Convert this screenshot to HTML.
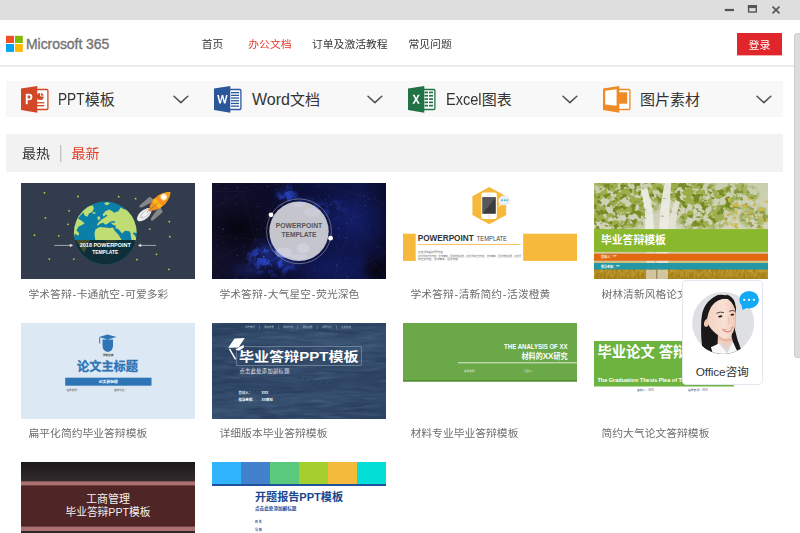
<!DOCTYPE html>
<html lang="zh-CN">
<head>
<meta charset="utf-8">
<title>Microsoft 365</title>
<style>
*{box-sizing:border-box;margin:0;padding:0}
html,body{width:800px;height:533px;overflow:hidden;background:#fff}
body{position:relative;font-family:"Liberation Sans","Noto Sans CJK SC",sans-serif;color:#333;-webkit-font-smoothing:antialiased}
.abs{position:absolute}
#titlebar{position:absolute;left:0;top:0;width:800px;height:20px;background:#dedede}
#titlebar svg{position:absolute;left:0;top:0}
#header{position:absolute;left:0;top:20px;width:794px;height:46px;background:#fff;border-bottom:1px solid #e9e9e9;box-shadow:0 1px 0 #f0f0f0}
#logo{position:absolute;left:6px;top:15px;width:17px;height:18px}
#brand{position:absolute;left:26px;top:14px;height:20px;line-height:20px;font-size:14px;color:#737373;-webkit-text-stroke:0.35px #737373;white-space:nowrap;letter-spacing:-0.06px}
.nav{position:absolute;top:14px;height:20px;line-height:21px;font-size:10.8px;color:#333;white-space:nowrap;transform:scaleY(.9);transform-origin:0 15px}
.nav.on{color:#e33b28}
#login{position:absolute;left:737px;top:13px;width:45px;height:22px;background:#e0262b;color:#fff;font-size:11px;line-height:24px;text-align:center;box-shadow:0 0.5px 0 #e9595c}
#cats{position:absolute;left:6px;top:81px;width:777px;height:36px;background:#f8f8f8}
.cat{position:absolute;top:0;width:194px;height:36px}
.cat svg.ic{position:absolute;left:15px;top:4.8px}
.cat .t{position:absolute;left:52px;top:0;height:36px;line-height:37px;font-size:15px;color:#333;white-space:nowrap}
.cat .t b{font-weight:normal;font-size:16px;display:inline-block;transform-origin:0 50%}
.cat svg.ch{position:absolute;left:167px;top:14px}
#sort{position:absolute;left:6px;top:134px;width:777px;height:38px;background:#f2f2f2}
#sort span{position:absolute;top:0;height:38px;line-height:39px;font-size:14px;white-space:nowrap;transform:scaleY(.93);transform-origin:0 26px}
#sort i{position:absolute;left:54px;top:11px;width:1px;height:17px;background:#c4c4c4;box-shadow:1px 0 0 #e0e0e0}
.card{position:absolute;width:174px;height:96px;overflow:hidden;contain:paint}
.card svg{display:block}
.cap{position:absolute;height:16px;line-height:16px;font-size:10.8px;color:#6c6c6c;white-space:nowrap;margin:1px 0 0 0.5px;transform:scaleY(.93);transform-origin:0 13.5px}
.cap i{font-style:normal;margin:0 0.75px}
#widget{position:absolute;left:682px;top:280px;width:81px;height:105px}
#widget .txt{position:absolute;left:0;top:83px;width:80.5px;text-align:center;font-size:11.8px;line-height:18px;color:#333;white-space:nowrap;letter-spacing:-0.15px}
#login span{display:inline-block;transform:scaleY(.92);transform-origin:0 19px}
#sb{position:absolute;left:794px;top:20px;width:6px;height:513px;background:#fff;overflow:hidden}
#sb i{position:absolute;left:0;top:13px;width:9px;height:325px;background:#dcdcdc;border:1px solid #cdcdcd;border-radius:3px}
</style>
</head>
<body>
<div id="titlebar">
<svg width="800" height="20" viewBox="0 0 800 20">
<rect x="724.8" y="8.9" width="9.2" height="2.2" fill="#555"/>
<rect x="748.6" y="5.8" width="7.7" height="6.2" fill="none" stroke="#555" stroke-width="1.4"/>
<rect x="747.9" y="5.1" width="9.1" height="3" fill="#555"/>
<path d="M772.5 6.6l7 6.8M779.5 6.6l-7 6.8" stroke="#555" stroke-width="1.6" fill="none"/>
</svg>
</div>
<div id="header">
<svg id="logo" viewBox="0 0 17 18"><rect x="0" y="0.8" width="8" height="7.2" fill="#f25022"/><rect x="9" y="0.8" width="7.8" height="7.2" fill="#7fba00"/><rect x="0" y="9" width="8" height="7.9" fill="#00a4ef"/><rect x="9" y="9" width="7.8" height="7.9" fill="#ffb900"/></svg>
<div id="brand">Microsoft 365</div>
<div class="nav" style="left:201.8px">首页</div>
<div class="nav on" style="left:248.3px">办公文档</div>
<div class="nav" style="left:312px">订单及激活教程</div>
<div class="nav" style="left:408.5px">常见问题</div>
<div id="login"><span>登录</span></div>
</div>
<div id="cats">
<div class="cat" style="left:0">
<svg class="ic" width="28" height="27" viewBox="0 0 28 27"><rect x="14.6" y="3.5" width="12.3" height="20" rx="1" fill="#fff" stroke="#d24726" stroke-width="1.3"/><circle cx="19.2" cy="10.4" r="3.5" fill="#d24726"/><path d="M19.6 6.2v3.9h3.9" stroke="#fff" stroke-width="0.9" fill="none"/><rect x="16" y="16.1" width="7.4" height="1.3" fill="#d24726"/><rect x="16" y="19" width="7.4" height="1.3" fill="#d24726"/><path d="M0 2.5L16.3 0v26.8L0 24.1z" fill="#d24726"/><path d="M4.8 7.8h3.4c2 0 3.2 1.2 3.2 3.2s-1.3 3.3-3.3 3.3H6.7v3.9H4.8zM6.7 9.5v3.1h1.2c1 0 1.5-.5 1.5-1.6s-.5-1.5-1.5-1.5z" fill="#fff"/></svg>
<div class="t"><b style="transform:scaleX(.855);margin-right:-4.5px">PPT</b>模板</div>
<svg class="ch" style="left:167px" width="17" height="10" viewBox="0 0 17 10"><path d="M1 1.2l6.9 6.4 6.9-6.4" fill="none" stroke="#505050" stroke-width="1.5" stroke-linecap="round" stroke-linejoin="round"/></svg>
</div>
<div class="cat" style="left:194px">
<svg class="ic" style="left:14.2px" width="28" height="27" viewBox="0 0 28 27"><rect x="14.6" y="3.5" width="12.3" height="20" rx="1" fill="#fff" stroke="#2b579a" stroke-width="1.3"/><g fill="#2b579a"><rect x="17" y="6" width="8" height="1.3"/><rect x="17" y="8.7" width="8" height="1.3"/><rect x="17" y="11.4" width="8" height="1.3"/><rect x="17" y="14.1" width="8" height="1.3"/><rect x="17" y="16.8" width="8" height="1.3"/><rect x="17" y="19.5" width="8" height="1.3"/></g><path d="M0 2.5L16.3 0v26.8L0 24.1z" fill="#2b579a"/><path d="M3.2 9h1.7l1.3 6 1.5-6h1.5l1.5 6 1.3-6h1.6l-2.1 8.6H9.9L8.4 11.8 6.9 17.6H5.3z" fill="#fff"/></svg>
<div class="t"><b>Word</b>文档</div>
<svg class="ch" style="left:167.25px" width="17" height="10" viewBox="0 0 17 10"><path d="M1 1.2l6.9 6.4 6.9-6.4" fill="none" stroke="#505050" stroke-width="1.5" stroke-linecap="round" stroke-linejoin="round"/></svg>
</div>
<div class="cat" style="left:388px">
<svg class="ic" style="left:14.3px" width="28" height="27" viewBox="0 0 28 27"><rect x="14.6" y="3.5" width="12.3" height="20" rx="1" fill="#fff" stroke="#217346" stroke-width="1.3"/><g fill="#217346"><rect x="16.5" y="5.6" width="3.5" height="1.7"/><rect x="21" y="5.6" width="4" height="1.7"/><rect x="16.5" y="8.9" width="3.5" height="1.7"/><rect x="21" y="8.9" width="4" height="1.7"/><rect x="16.5" y="12.2" width="3.5" height="1.7"/><rect x="21" y="12.2" width="4" height="1.7"/><rect x="16.5" y="15.5" width="3.5" height="1.7"/><rect x="21" y="15.5" width="4" height="1.7"/><rect x="16.5" y="18.8" width="3.5" height="1.7"/><rect x="21" y="18.8" width="4" height="1.7"/></g><path d="M0 2.5L16.3 0v26.8L0 24.1z" fill="#217346"/><path d="M4.6 8.8h2l1.6 3.1 1.6-3.1h1.9l-2.5 4.4 2.6 4.6H9.8L8.1 14.5 6.4 17.8H4.4l2.7-4.6z" fill="#fff"/></svg>
<div class="t"><b style="transform:scaleX(.91);margin-right:-3.5px">Excel</b>图表</div>
<svg class="ch" style="left:167.5px" width="17" height="10" viewBox="0 0 17 10"><path d="M1 1.2l6.9 6.4 6.9-6.4" fill="none" stroke="#505050" stroke-width="1.5" stroke-linecap="round" stroke-linejoin="round"/></svg>
</div>
<div class="cat" style="left:582px">
<svg class="ic" style="left:14.5px" width="28" height="27" viewBox="0 0 28 27"><rect x="14.6" y="3.5" width="12.3" height="20" rx="1" fill="#fff" stroke="#f08a24" stroke-width="1.3"/><rect x="16" y="6.3" width="8.2" height="11.4" fill="#f08a24"/><path d="M0 2.5L16.3 0v26.8L0 24.1z" fill="#f08a24"/><path d="M2.2 4.8L13.6 3.2v16.6L2.2 18.4z" fill="#fff"/></svg>
<div class="t">图片素材</div>
<svg class="ch" style="left:167.7px" width="17" height="10" viewBox="0 0 17 10"><path d="M1 1.2l6.9 6.4 6.9-6.4" fill="none" stroke="#505050" stroke-width="1.5" stroke-linecap="round" stroke-linejoin="round"/></svg>
</div>
</div>
<div id="sort"><span style="left:16px;color:#333">最热</span><i></i><span style="left:65.5px;color:#e33b28">最新</span></div>

<!--CARDS-START-->
<!-- card 1 -->
<div class="card" style="left:21px;top:183px">
<svg width="174" height="96" viewBox="0 0 174 96">
<rect width="174" height="96" fill="#333c4d"/>
<g fill="#cfc93c"><circle cx="23.5" cy="9.8" r="0.9"/><circle cx="57.0" cy="13.5" r="0.9"/><circle cx="97.7" cy="13.7" r="0.9"/><circle cx="114.6" cy="15.7" r="0.9"/><circle cx="48.1" cy="27.8" r="0.9"/><circle cx="24.4" cy="34.8" r="0.9"/><circle cx="47.0" cy="41.3" r="0.9"/><circle cx="13.5" cy="52.2" r="0.9"/><circle cx="37.8" cy="52.8" r="0.9"/><circle cx="28.3" cy="76.1" r="0.9"/><circle cx="52.8" cy="76.1" r="0.9"/><circle cx="115.9" cy="76.6" r="0.9"/><circle cx="135.5" cy="71.3" r="0.9"/><circle cx="148.3" cy="38.7" r="0.9"/><circle cx="128.8" cy="46.1" r="0.9"/><circle cx="148.8" cy="53.7" r="0.9"/><circle cx="147.9" cy="86.3" r="0.9"/></g>
<clipPath id="c1"><circle cx="84.3" cy="50" r="31.4"/></clipPath>
<g clip-path="url(#c1)">
<rect x="50" y="15" width="70" height="70" fill="#0c7fa9"/>
<g transform="translate(43 7) scale(0.10875)" fill="#bfdd72">
<path d="M262 140L275 165 262 200 230 215 215 245 190 235 178 208 150 235 130 262 165 285 190 305 165 322 135 335 115 370 140 400 130 420 100 400 85 470H40V200z"/>
<path d="M370 120L400 112 422 122 405 135 385 140z"/>
<path d="M262 205h28l-2 13h-24zM305 250l20-10 10 25-20 15z"/>
<path d="M355 225L380 195 415 180 445 195 460 210 500 195 520 160 545 175 580 185 700 280V400L640 390 625 415 600 380 560 375 535 400 500 360 470 350 480 330 450 320 430 300H470L465 285 430 290 400 310 380 320 360 300 330 310 310 330 305 315 330 285 350 270 380 250 400 235 385 225 365 245z"/>
<path d="M290 360L330 340 380 345 420 350 450 345 470 380 500 410 525 450 540 480H290L280 400z"/>
<path d="M610 400l30 5 25 35-10 40h-30z"/>
</g>
<rect x="50" y="57" width="70" height="30" fill="#0e2f39"/>
<path d="M55 57h14l-6 13z" fill="#5d5a28" opacity=".7"/>
<path d="M84 57h12l-7 9z" fill="#3c4a2a" opacity=".6"/>
</g>
<text x="84.3" y="64.4" text-anchor="middle" font-family="'Liberation Sans',sans-serif" font-weight="bold" font-size="5.5" fill="#fff" textLength="51" lengthAdjust="spacingAndGlyphs">2018 POWERPOINT</text>
<text x="84.3" y="71" text-anchor="middle" font-family="'Liberation Sans',sans-serif" font-weight="bold" font-size="5.5" fill="#fff" textLength="26" lengthAdjust="spacingAndGlyphs">TEMPLATE</text>
<path d="M33.3 62.4h17M49.2 61.2l2.4 1.2-2.4 1.2zM118 62.4h17M119.8 61.2l-2.4 1.2 2.4 1.2z" stroke="#ececec" stroke-width="0.6" fill="#ececec"/>
<g transform="translate(139 18.1) rotate(-40.8)">
<path d="M-19.6-9.2l2-1h12.6l1.5 5.5h-5l-9.5-2.3zM-19.6 9.2l2 1h12.6l1.5-5.5h-5l-9.5 2.3z" fill="#878787"/>
<ellipse cx="-20.8" cy="0" rx="8.8" ry="4.4" fill="#ededed"/>
<ellipse cx="-19.5" cy="0" rx="6.4" ry="2.9" fill="#cfcfcf"/>
<ellipse cx="-18.5" cy="0" rx="4.8" ry="1.8" fill="#fafafa"/>
<path d="M-14.5-1.6h4v3.2h-4z" fill="#f7941d"/>
<clipPath id="rk"><path d="M-12-2.4Q-6-6 2-5.6 10-4.4 13.8 0 10 4.4 2 5.6-6 6-12 2.4z"/></clipPath>
<g clip-path="url(#rk)"><rect x="-13" y="-7" width="28" height="14" fill="#f7921c"/><rect x="-5.6" y="-7" width="3.8" height="14" fill="#fdb913"/><path d="M10-6l5 6-5 6z" fill="#fbb017" opacity=".6"/></g>
<circle cx="5.6" cy="-0.6" r="3.3" fill="#ffe6a8"/>
<circle cx="5.6" cy="-0.6" r="2.3" fill="#fffdf6"/>
<path d="M-17.6 0h15" stroke="#777" stroke-width="0.7"/>
</g>
</svg>
</div>
<div class="cap" style="left:28px;top:285px">学术答辩<i>-</i>卡通航空<i>-</i>可爱多彩</div>

<!-- card 2 -->
<div class="card" style="left:212px;top:183px">
<svg width="174" height="96" viewBox="0 0 174 96">
<defs>
<linearGradient id="g2a" x1="0" y1="0" x2="1" y2="0"><stop offset="0" stop-color="#11102a"/><stop offset="0.3" stop-color="#0c0c28"/><stop offset="0.6" stop-color="#0c113e"/><stop offset="0.85" stop-color="#0e1448"/><stop offset="1" stop-color="#0a0d30"/></linearGradient>
<radialGradient id="g2b" cx="0.5" cy="0.5" r="0.5"><stop offset="0" stop-color="#3a5cf0" stop-opacity=".9"/><stop offset="0.5" stop-color="#2642c8" stop-opacity=".5"/><stop offset="1" stop-color="#2038b0" stop-opacity="0"/></radialGradient>
<radialGradient id="g2c" cx="0.5" cy="0.5" r="0.5"><stop offset="0" stop-color="#05040c" stop-opacity=".85"/><stop offset="1" stop-color="#05040c" stop-opacity="0"/></radialGradient>
<radialGradient id="g2d" cx="0.5" cy="0.5" r="0.5"><stop offset="0" stop-color="#1a2a90" stop-opacity=".8"/><stop offset="1" stop-color="#1a2a90" stop-opacity="0"/></radialGradient>
<filter id="f2n" color-interpolation-filters="sRGB" x="0" y="0" width="100%" height="100%"><feTurbulence type="fractalNoise" baseFrequency="0.12" numOctaves="4" seed="9"/><feColorMatrix type="matrix" values="0 0 0 0 0.17  0 0 0 0 0.29  0 0 0 0 0.85  0 7 0 0 -3.3"/></filter>
<filter id="f2s" color-interpolation-filters="sRGB" x="0" y="0" width="100%" height="100%"><feTurbulence type="fractalNoise" baseFrequency="0.9" numOctaves="1" seed="3"/><feColorMatrix type="matrix" values="0 0 0 0 0.5  0 0 0 0 0.56  0 0 0 0 1  0 0 14 0 -10.2"/></filter>
<radialGradient id="m2" cx="0.5" cy="0.5" r="0.5"><stop offset="0" stop-color="#fff"/><stop offset="0.5" stop-color="#fff" stop-opacity=".7"/><stop offset="1" stop-color="#fff" stop-opacity="0"/></radialGradient>
<mask id="mk2"><rect width="174" height="96" fill="#000"/><g transform="scale(0.2175)"><ellipse cx="280" cy="340" rx="150" ry="100" fill="url(#m2)"/><ellipse cx="345" cy="60" rx="60" ry="70" fill="url(#m2)" opacity=".8"/><ellipse cx="440" cy="110" rx="90" ry="50" fill="url(#m2)" opacity=".5"/><ellipse cx="560" cy="120" rx="80" ry="60" fill="url(#m2)" opacity=".35"/></g></mask>
</defs>
<rect width="174" height="96" fill="url(#g2a)"/>
<g transform="scale(0.2175)">
<ellipse cx="640" cy="170" rx="190" ry="150" fill="url(#g2d)" opacity=".55"/>
<ellipse cx="540" cy="390" rx="220" ry="120" fill="url(#g2d)" opacity=".45"/>
<ellipse cx="120" cy="210" rx="170" ry="130" fill="url(#g2c)"/>
<ellipse cx="760" cy="400" rx="90" ry="90" fill="url(#g2c)"/>

<ellipse cx="250" cy="320" rx="90" ry="70" fill="url(#g2b)" opacity=".45"/>
<ellipse cx="330" cy="360" rx="100" ry="60" fill="url(#g2b)" opacity=".45"/>
<ellipse cx="180" cy="400" rx="120" ry="50" fill="url(#g2b)" opacity=".25"/>
<ellipse cx="340" cy="50" rx="45" ry="50" fill="url(#g2b)" opacity=".35"/>
<ellipse cx="420" cy="90" rx="90" ry="40" fill="url(#g2b)" opacity=".25"/>
<g stroke="#8c8478" stroke-width="1.2" opacity=".28" fill="none"><path d="M0 120L140 40 330 0M140 40L200 260 0 360M200 260L100 441M200 260L480 441M480 0L640 170 800 90M640 170L560 441M640 170L800 320M330 0L200 260M480 0L800 90M0 40L140 40M560 441L800 320M640 170L700 0M0 240L200 260M100 441L0 360M700 300L800 441M330 0L480 0"/></g>
<g fill="#5a78ff" opacity=".8"><circle cx="50" cy="212" r="3"/><circle cx="548" cy="98" r="2.5"/><circle cx="620" cy="185" r="2"/><circle cx="238" cy="338" r="3"/><circle cx="200" cy="345" r="2"/><circle cx="700" cy="60" r="2"/><circle cx="470" cy="400" r="2"/></g>
</g>
<rect width="174" height="96" filter="url(#f2s)" opacity=".4"/>
<g mask="url(#mk2)"><rect width="174" height="96" filter="url(#f2n)"/></g>
<circle cx="87" cy="48.3" r="32.4" fill="none" stroke="#7f819c" stroke-width="0.9" opacity=".85"/>
<circle cx="87" cy="48.3" r="29.7" fill="#c5c5ce"/>
<g transform="scale(0.2175)" fill="#dde3f4">
<ellipse cx="420" cy="300" rx="28" ry="22" opacity=".4"/><ellipse cx="330" cy="320" rx="40" ry="22" opacity=".35"/><ellipse cx="400" cy="340" rx="40" ry="12" opacity=".3"/><ellipse cx="460" cy="135" rx="40" ry="20" opacity=".25"/><ellipse cx="400" cy="100" rx="30" ry="10" opacity=".25"/>
</g>
<circle cx="59" cy="31.8" r="2.4" fill="#fff"/>
<circle cx="118.6" cy="55.2" r="2.4" fill="#fff"/>
<text x="87" y="45" text-anchor="middle" font-family="'Liberation Sans',sans-serif" font-weight="bold" font-size="6.6" fill="#55555a" textLength="46.5" lengthAdjust="spacingAndGlyphs">POWERPOINT</text>
<text x="87" y="54.4" text-anchor="middle" font-family="'Liberation Sans',sans-serif" font-weight="bold" font-size="6.6" fill="#55555a" textLength="35" lengthAdjust="spacingAndGlyphs">TEMPLATE</text>
</svg>
</div>
<div class="cap" style="left:219px;top:285px">学术答辩<i>-</i>大气星空<i>-</i>荧光深色</div>

<!-- card 3 -->
<div class="card" style="left:403px;top:183px">
<svg width="174" height="96" viewBox="0 0 174 96">
<rect width="174" height="96" fill="#fff"/>
<path d="M86.3 3.9l16.9 9.3v18.7L86.3 41.3 69.4 31.9V13.2z" fill="#f6b93b"/>
<rect x="78.4" y="9.6" width="15.4" height="26.4" rx="2.2" fill="#fff"/>
<rect x="79.5" y="14.2" width="13.3" height="16.6" fill="#3b3b3e"/>
<path d="M79.5 14.2h13.3L79.5 30.8z" fill="#58585c"/>
<rect x="83.5" y="11.7" width="5.2" height="0.6" rx="0.3" fill="#c8c8c8"/>
<circle cx="86.1" cy="33.4" r="1.3" fill="none" stroke="#c4c4c4" stroke-width="0.4"/>
<path d="M95.4 17.4a6.1 4.9 0 1 1 3.2 4.3l-3.4 2.6 1.3-3.8a5 5 0 0 1-1.1-3.1z" fill="#eceff1"/>
<g fill="#35b6d6"><rect x="98.3" y="16.4" width="1.5" height="1.7"/><rect x="100.9" y="16.4" width="1.5" height="1.7"/><rect x="103.5" y="16.4" width="1.5" height="1.7"/></g>
<rect x="0" y="50.7" width="12.7" height="27.2" fill="#f6b93b"/>
<rect x="120.2" y="50.7" width="54" height="27.2" fill="#f6b93b"/>
<text x="14.7" y="57.7" font-family="'Liberation Sans',sans-serif" font-size="9.4" font-weight="bold" fill="#333" textLength="56" lengthAdjust="spacingAndGlyphs">POWERPOINT</text>
<text x="73.8" y="57.7" font-family="'Liberation Sans',sans-serif" font-size="6.4" fill="#444" textLength="30.2" lengthAdjust="spacingAndGlyphs">TEMPLATE</text>
<rect x="14.7" y="61.1" width="103" height="0.8" fill="#f6b93b"/>
<g font-family="'Liberation Sans','Noto Sans CJK SC',sans-serif" font-size="2.6" fill="#666"><text x="15" y="70.3" textLength="25" lengthAdjust="spacingAndGlyphs">此处添加副标题内容</text><text x="15" y="73.8" textLength="103" lengthAdjust="spacingAndGlyphs">此处添加正文内容，文字精简，图文排版合理，此处添加正文内容，文字精简，图文排版合理，此处添</text><text x="15" y="77" textLength="40" lengthAdjust="spacingAndGlyphs">加正文内容，文字精简，图文排版</text></g>
</svg>
</div>
<div class="cap" style="left:410px;top:285px">学术答辩<i>-</i>清新简约<i>-</i>活泼橙黄</div>

<!-- card 4 -->
<div class="card" style="left:594px;top:183px">
<svg width="174" height="96" viewBox="0 0 174 96">
<defs>
<linearGradient id="g4a" x1="0" y1="0" x2="0" y2="1"><stop offset="0" stop-color="#c9cfae"/><stop offset="0.45" stop-color="#d2d4be"/><stop offset="0.8" stop-color="#cfc9a0"/><stop offset="0.9" stop-color="#bfa536"/><stop offset="1" stop-color="#b89c2e"/></linearGradient>
<filter id="f4a" color-interpolation-filters="sRGB" x="0" y="0" width="100%" height="100%"><feTurbulence type="fractalNoise" baseFrequency="0.11 0.13" numOctaves="3" seed="7"/><feColorMatrix type="matrix" values="0 0 0 0 0.60  0 0 0 0 0.67  0 0 0 0 0.27  9 0 0 0 -4.0"/><feGaussianBlur stdDeviation="0.5"/></filter>
<filter id="f4b" color-interpolation-filters="sRGB" x="0" y="0" width="100%" height="100%"><feTurbulence type="fractalNoise" baseFrequency="0.16 0.18" numOctaves="2" seed="21"/><feColorMatrix type="matrix" values="0 0 0 0 0.45  0 0 0 0 0.53  0 0 0 0 0.13  0 9 0 0 -4.7"/><feGaussianBlur stdDeviation="0.5"/></filter>
<linearGradient id="g4g" x1="0" y1="0" x2="0" y2="1"><stop offset="0" stop-color="#c8a232"/><stop offset="1" stop-color="#b38c22"/></linearGradient>
<filter id="f4g" color-interpolation-filters="sRGB" x="0" y="0" width="100%" height="100%"><feTurbulence type="fractalNoise" baseFrequency="0.5 0.2" numOctaves="2" seed="2"/><feColorMatrix type="matrix" values="0 0 0 0 0.55  0 0 0 0 0.4  0 0 0 0 0.05  0 0 3 0 -1"/></filter>
<filter id="f4c" color-interpolation-filters="sRGB" x="0" y="0" width="100%" height="100%"><feTurbulence type="fractalNoise" baseFrequency="0.2" numOctaves="2" seed="5"/><feColorMatrix type="matrix" values="0 0 0 0 0.80  0 0 0 0 0.72  0 0 0 0 0.28  0 0 8 0 -4.6"/><feGaussianBlur stdDeviation="0.5"/></filter>
<radialGradient id="m4" cx="0.5" cy="0.5" r="0.5"><stop offset="0" stop-color="#fff"/><stop offset="0.7" stop-color="#fff" stop-opacity=".9"/><stop offset="1" stop-color="#fff" stop-opacity="0"/></radialGradient>
<mask id="mk4"><rect width="174" height="96" fill="#000"/><g transform="scale(0.2175)"><ellipse cx="110" cy="90" rx="200" ry="150" fill="url(#m4)"/><ellipse cx="330" cy="30" rx="200" ry="70" fill="url(#m4)"/><ellipse cx="500" cy="110" rx="170" ry="120" fill="url(#m4)"/><ellipse cx="660" cy="60" rx="110" ry="70" fill="url(#m4)" opacity=".8"/><ellipse cx="740" cy="160" rx="80" ry="60" fill="url(#m4)" opacity=".7"/><ellipse cx="60" cy="190" rx="90" ry="50" fill="url(#m4)" opacity=".8"/></g></mask>
</defs>
<rect width="174" height="96" fill="url(#g4a)"/>
<g mask="url(#mk4)"><rect width="174" height="46.5" filter="url(#f4a)"/></g>
<g mask="url(#mk4)"><rect width="174" height="46.5" filter="url(#f4b)"/></g>
<g transform="scale(0.2175)" opacity=".92">
<path d="M215 30q25 90 20 185h40q0-100-30-190z" fill="#efeee6"/>
<path d="M300 212q5-120 25-212h30q-10 110-10 212z" fill="#eeede4"/>
<path d="M340 212q5-70 35-135l20 10q-20 70-20 125z" fill="#e6e4d6"/>
<path d="M240 316h40v84h-40z" fill="#dfdccb"/><path d="M287 316h55v84h-55z" fill="#e8e6da"/>
<g fill="#6b6a58" opacity=".55"><rect x="225" y="120" width="14" height="5"/><rect x="232" y="160" width="10" height="4"/><rect x="308" y="150" width="12" height="5"/><rect x="318" y="70" width="10" height="4"/><rect x="350" y="130" width="10" height="5"/><rect x="250" y="400" width="14" height="6"/><rect x="300" y="420" width="16" height="6"/></g>
</g>
<rect x="130" y="14" width="44" height="32" filter="url(#f4c)"/>
<rect x="0" y="46.1" width="174" height="22.8" fill="#8ab82d"/>
<rect x="0" y="70.7" width="174" height="7" fill="#e2690f"/>
<rect x="0" y="80" width="174" height="6.8" fill="#2497a6"/>
<rect x="0" y="86.8" width="174" height="9.2" fill="url(#g4g)"/><rect x="0" y="86.8" width="174" height="9.2" filter="url(#f4g)" opacity=".5"/><rect x="52" y="86.8" width="22" height="9.2" fill="#d8d0b4" opacity=".85"/><rect x="62" y="86.8" width="1.5" height="9.2" fill="#7a6a40" opacity=".6"/>
<text x="7" y="61" font-family="'Liberation Sans','Noto Sans CJK SC',sans-serif" font-weight="bold" font-size="10.8" fill="#fff">毕业答辩模板</text>
<text x="7" y="75.4" font-family="'Liberation Sans','Noto Sans CJK SC',sans-serif" font-weight="bold" font-size="3" fill="#fff">答辩人：***</text>
<text x="7" y="84.6" font-family="'Liberation Sans','Noto Sans CJK SC',sans-serif" font-weight="bold" font-size="3" fill="#fff">指导老师：***</text>
</svg>
</div>
<div class="cap" style="left:601px;top:285px">树林清新风格论文答辩模板</div>

<!-- card 5 -->
<div class="card" style="left:21px;top:323px">
<svg width="174" height="96" viewBox="0 0 174 96">
<rect width="174" height="96" fill="#dce8f3"/>
<path d="M78 14l8.5-2.5 9 2.5-9 2.5zM81.5 16.5h10.5v6q0 5.5-5.2 6.5-5.3-1-5.3-6.5zM78.2 14.5h1v6h-1z" fill="#2e75b6"/>
<text x="87" y="33.2" text-anchor="middle" font-family="'Liberation Sans','Noto Sans CJK SC',sans-serif" font-weight="bold" font-size="2.7" fill="#333">学校名称</text>
<text x="86.5" y="47.8" text-anchor="middle" font-family="'Liberation Sans','Noto Sans CJK SC',sans-serif" font-weight="bold" font-size="12.2" fill="#2e75b6" stroke="#2e75b6" stroke-width="0.3">论文主标题</text>
<rect x="44.2" y="54.7" width="86.3" height="8" fill="#2e75b6"/>
<text x="87.3" y="60.2" text-anchor="middle" font-family="'Liberation Sans','Noto Sans CJK SC',sans-serif" font-weight="bold" font-size="3.8" fill="#fff">论文副标题</text>
<text x="45.5" y="67.5" font-family="'Liberation Sans','Noto Sans CJK SC',sans-serif" font-size="2.6" fill="#555">指导老师：</text>
<text x="93" y="67.5" font-family="'Liberation Sans','Noto Sans CJK SC',sans-serif" font-size="2.6" fill="#555">答辩学生：</text>
</svg>
</div>
<div class="cap" style="left:28px;top:424px">扁平化简约毕业答辩模板</div>

<!-- card 6 -->
<div class="card" style="left:212px;top:323px">
<svg width="174" height="96" viewBox="0 0 174 96">
<defs>
<linearGradient id="g6a" x1="0" y1="0" x2="1" y2="1"><stop offset="0" stop-color="#2c4261"/><stop offset="0.5" stop-color="#354d6c"/><stop offset="1" stop-color="#2d4463"/></linearGradient>
<filter id="f6" color-interpolation-filters="sRGB" x="0" y="0" width="100%" height="100%"><feTurbulence type="fractalNoise" baseFrequency="0.03 0.25" numOctaves="3" seed="11"/><feColorMatrix type="matrix" values="0 0 0 0 0.13  0 0 0 0 0.2  0 0 0 0 0.33  0 1.2 0 0 -0.46"/></filter>
<filter id="f6b" color-interpolation-filters="sRGB" x="0" y="0" width="100%" height="100%"><feTurbulence type="fractalNoise" baseFrequency="0.04 0.3" numOctaves="2" seed="4"/><feColorMatrix type="matrix" values="0 0 0 0 0.32  0 0 0 0 0.43  0 0 0 0 0.56  1.2 0 0 0 -0.56"/></filter>
</defs>
<rect width="174" height="96" fill="url(#g6a)"/>
<rect width="174" height="96" filter="url(#f6)"/><rect width="174" height="96" filter="url(#f6b)"/>
<path d="M0 14q60-10 174 6v10q-110-14-174-4z" fill="#456382" opacity=".25"/>
<path d="M0 52q80 18 174-8v12q-90 24-174 8z" fill="#2a4060" opacity=".5"/>
<path d="M0 80q90-16 174-10v10q-90-4-174 12z" fill="#466484" opacity=".2"/>
<g font-family="'Liberation Sans','Noto Sans CJK SC',sans-serif" font-size="2.4" fill="#b8c4d2" text-anchor="middle"><text x="38" y="5">关于我们</text><text x="57" y="5">研究背景</text><text x="76" y="5">研究方法</text><text x="95.5" y="5">研究结果</text><text x="115" y="5">问题讨论</text><text x="134" y="5">论文总结</text></g>
<g stroke="#b8c4d2" stroke-width="0.3"><path d="M47.5 2.5v4M66.5 2.5v4M85.5 2.5v4M105 2.5v4M124.5 2.5v4"/></g>
<rect x="24.2" y="23.6" width="125" height="18.8" fill="none" stroke="#9fb0c4" stroke-width="0.5"/>
<path d="M16.2 24.8l6.3-9.4 10.3-.5-6.3 9.6zM23.4 26.4l8.3-4.6v3l-4.8 3z" fill="#fff"/>
<path d="M17.5 25.8l6.1 10.5" stroke="#fff" stroke-width="1.4"/>
<text x="27" y="37.8" font-family="'Liberation Sans','Noto Sans CJK SC',sans-serif" font-weight="bold" font-size="13" fill="#fff" textLength="119.5" lengthAdjust="spacingAndGlyphs">毕业答辩PPT模板</text>
<text x="27.5" y="49.6" font-family="'Liberation Sans','Noto Sans CJK SC',sans-serif" font-size="5.2" fill="#e6ebf2" letter-spacing="0.4">点击此处添加副标题</text>
<g font-family="'Liberation Sans','Noto Sans CJK SC',sans-serif" font-size="3.4" font-weight="bold" fill="#fff"><text x="26.5" y="71">答辩人：</text><text x="49.5" y="71">XXX</text><text x="26.5" y="78.3">指导老师：</text><text x="49.5" y="78.3">XX教授</text></g>
<g fill="#1f3450" opacity=".7"><circle cx="88" cy="55" r="0.8"/><circle cx="93" cy="56" r="0.8"/><circle cx="99" cy="57.5" r="0.8"/><circle cx="104" cy="53" r="0.8"/><circle cx="111" cy="57" r="0.8"/><circle cx="118" cy="60" r="0.8"/><circle cx="125" cy="61" r="0.8"/><circle cx="112" cy="60.5" r="0.8"/></g>
</svg>
</div>
<div class="cap" style="left:219px;top:424px">详细版本毕业答辩模板</div>

<!-- card 7 -->
<div class="card" style="left:403px;top:323px">
<svg width="174" height="96" viewBox="0 0 174 96">
<rect width="174" height="96" fill="#fff"/>
<rect width="174" height="58.5" fill="#6aa848"/>
<rect y="57" width="174" height="1.5" fill="#4f8a34"/>
<text x="164.6" y="26" text-anchor="end" font-family="'Liberation Sans',sans-serif" font-weight="bold" font-size="6.8" fill="#fff" textLength="63.5" lengthAdjust="spacingAndGlyphs">THE ANALYSIS OF XX</text>
<text x="164.6" y="35.6" text-anchor="end" font-family="'Liberation Sans','Noto Sans CJK SC',sans-serif" font-weight="bold" font-size="7.6" fill="#fff" textLength="46" lengthAdjust="spacingAndGlyphs">材料的<tspan font-size="8.8">XX</tspan>研究</text>
<rect x="55" y="39.3" width="119" height="1" fill="#dcecd4"/>
<text x="61" y="48.5" font-family="'Liberation Sans','Noto Sans CJK SC',sans-serif" font-size="2.6" fill="#e6f0e0">指导老师：</text>
<text x="121" y="48.5" font-family="'Liberation Sans','Noto Sans CJK SC',sans-serif" font-size="2.6" fill="#e6f0e0">汇报人：</text>
</svg>
</div>
<div class="cap" style="left:410px;top:424px">材料专业毕业答辩模板</div>

<!-- card 8 -->
<div class="card" style="left:594px;top:323px">
<svg width="174" height="96" viewBox="0 0 174 96">
<rect width="174" height="96" fill="#fff"/>
<rect x="0" y="18" width="140" height="45.5" fill="#6cb33f"/>
<text x="3.5" y="33.6" font-family="'Liberation Sans','Noto Sans CJK SC',sans-serif" font-weight="bold" font-size="14.3" fill="#fff">毕业论文 答辩模板</text>
<text x="3.4" y="58.6" font-family="'Liberation Sans',sans-serif" font-weight="bold" font-size="5.4" fill="#fff" textLength="105" lengthAdjust="spacingAndGlyphs">The Graduation Thesis Plea of Template</text>
<text x="43" y="68.3" font-family="'Liberation Sans','Noto Sans CJK SC',sans-serif" font-size="2.8" fill="#35507a">答辩人：XXX</text>
<text x="94" y="68.3" font-family="'Liberation Sans','Noto Sans CJK SC',sans-serif" font-size="2.8" fill="#35507a">指导老师：XXX</text>
</svg>
</div>
<div class="cap" style="left:601px;top:424px">简约大气论文答辩模板</div>

<!-- card 9 -->
<div class="card" style="left:21px;top:462px;height:71px">
<svg width="174" height="96" viewBox="0 0 174 96">
<defs><linearGradient id="g9a" x1="0" y1="0" x2="0" y2="1"><stop offset="0" stop-color="#1d191b"/><stop offset="1" stop-color="#332a2c"/></linearGradient></defs>
<rect width="174" height="96" fill="#4f2526"/>
<rect width="174" height="19.5" fill="url(#g9a)"/>
<rect y="19.4" width="174" height="4" fill="#ab7172"/>
<rect y="64.6" width="174" height="4.6" fill="#ab7172"/>
<rect y="69.2" width="174" height="27" fill="#2b2426"/>
<text x="87" y="40.8" text-anchor="middle" font-family="'Liberation Sans','Noto Sans CJK SC',sans-serif" font-size="11" fill="#f4eeee">工商管理</text>
<text x="87" y="53.8" text-anchor="middle" font-family="'Liberation Sans','Noto Sans CJK SC',sans-serif" font-size="11" fill="#f4eeee" textLength="85" lengthAdjust="spacingAndGlyphs">毕业答辩PPT模板</text>
</svg>
</div>

<!-- card 10 -->
<div class="card" style="left:212px;top:462px;height:71px">
<svg width="174" height="96" viewBox="0 0 174 96">
<rect width="174" height="96" fill="#fff"/>
<rect x="0" y="0" width="29" height="22.5" fill="#2fb4fd"/>
<rect x="29" y="0" width="29" height="22.5" fill="#4481cd"/>
<rect x="58" y="0" width="29" height="22.5" fill="#59ca7c"/>
<rect x="87" y="0" width="29" height="22.5" fill="#a4cf2d"/>
<rect x="116" y="0" width="29" height="22.5" fill="#f4ba3c"/>
<rect x="145" y="0" width="29" height="22.5" fill="#03ded6"/>
<rect x="0" y="22" width="174" height="2" fill="#1f519f"/>
<text x="43" y="39" font-family="'Liberation Sans','Noto Sans CJK SC',sans-serif" font-weight="bold" font-size="11.6" fill="#17478f" textLength="88" lengthAdjust="spacingAndGlyphs">开题报告PPT模板</text>
<text x="43" y="47.9" font-family="'Liberation Sans','Noto Sans CJK SC',sans-serif" font-weight="bold" font-size="4.6" fill="#2a4a96">点击此处添加副标题</text>
<text x="43" y="61" font-family="'Liberation Sans','Noto Sans CJK SC',sans-serif" font-weight="bold" font-size="3" fill="#2a4a96">姓  名</text>
<text x="43" y="69.4" font-family="'Liberation Sans','Noto Sans CJK SC',sans-serif" font-weight="bold" font-size="3" fill="#2a4a96">导  师</text>
</svg>
</div>

<!-- widget -->
<div id="widget">
<svg width="81" height="105" viewBox="0 0 81 105" style="position:absolute;left:0;top:0">
<defs><clipPath id="av"><circle cx="41.2" cy="43" r="31"/></clipPath>
<linearGradient id="sk" x1="0" y1="0" x2="1" y2="0"><stop offset="0" stop-color="#f3d2c2"/><stop offset="0.6" stop-color="#f8e0d4"/><stop offset="1" stop-color="#efc7b4"/></linearGradient></defs>
<rect x="0.5" y="0.5" width="80" height="104" rx="3.5" fill="#fff" stroke="#e3e7ef" stroke-width="1"/>
<circle cx="41.2" cy="43" r="31" fill="#dfe0e4"/>
<g clip-path="url(#av)">
<path d="M21 74Q18.5 55 19.5 40 20 22 36 15 47 13.5 52 22 54 27 53.5 32L53 50Q55 60 59 69L54 74z" fill="#1b1819"/>
<path d="M36 53l14.5 2 .5 9-6 8.5-9.5-6.5z" fill="#f2cdbb"/>
<path d="M36.5 55q6 6.5 14 2.5v2.5q-8 4-14-2z" fill="#e0ae99" opacity=".75"/>
<path d="M26 68.5l11-5 8 9 6-10.5 7 5 4 9H24z" fill="#f8f8fa"/>
<path d="M37 63.5l8 9 6-10.5-1.5-1-5 8-5.5-7z" fill="#dadbe0"/>
<path d="M25 40Q25.5 28 31 22.5 38 17.5 46 19 51.5 21 53 28 54.5 36 53.5 44 52 53 47.5 57.5 43.5 60 38.5 57 31 52 27 46 25 43 25 40z" fill="url(#sk)"/>
<ellipse cx="23.8" cy="42.8" rx="2.3" ry="4.2" fill="#efc6b3" transform="rotate(-8 23.8 42.8)"/>
<path d="M19.5 45Q19 24 35 15.5 44 13.5 50 18.5 42 17.5 36 20.5 29 24.5 26.5 33 25 38 24 39.5 21.5 41 22 46.5 23.5 52 26.5 54 27 64 31 74H21Q19 58 19.5 45z" fill="#1b1819"/>
<path d="M44 14.5Q51 16 53 23 54.5 28 53.8 33 52.5 24 46 19z" fill="#1b1819"/>
<path d="M51.5 52Q53 60 59 69L55.5 71.5Q50.5 62 49.5 56z" fill="#1b1819"/>
<path d="M34.5 33.3Q38 31.3 42 32.6M47.3 31.3Q50.3 29.6 53 31.2" stroke="#4a342c" stroke-width="0.9" fill="none"/>
<ellipse cx="38.3" cy="36.4" rx="2.2" ry="1" fill="#2a1d1a" transform="rotate(-8 38.3 36.4)"/><ellipse cx="50.3" cy="34.7" rx="1.9" ry="0.9" fill="#2a1d1a" transform="rotate(-8 50.3 34.7)"/>
<path d="M46.3 37Q48 41.5 46.6 43.3" stroke="#e3b4a0" stroke-width="0.7" fill="none"/>
<path d="M39.8 48.6Q45.5 50.8 51.2 46.4 50 51.8 45.8 52.6 41.5 52.4 39.8 48.6z" fill="#e0857e"/>
<path d="M41 49.3Q45.5 51 50.2 47.5 48.8 50.6 45.8 51 42.8 50.9 41 49.3z" fill="#fff"/>
</g>
<ellipse cx="67.1" cy="19.7" rx="9.8" ry="8.7" fill="#12aaf5"/>
<path d="M59.5 24l1 6 5.5-2.5z" fill="#12aaf5"/>
<g fill="#fff"><circle cx="62.2" cy="19.8" r="1.15"/><circle cx="67" cy="19.8" r="1.15"/><circle cx="71.9" cy="19.8" r="1.15"/></g>
</svg>
<div class="txt">Office咨询</div>
</div>
<!--CARDS-END-->

<div id="sb"><i></i></div>
</body>
</html>
